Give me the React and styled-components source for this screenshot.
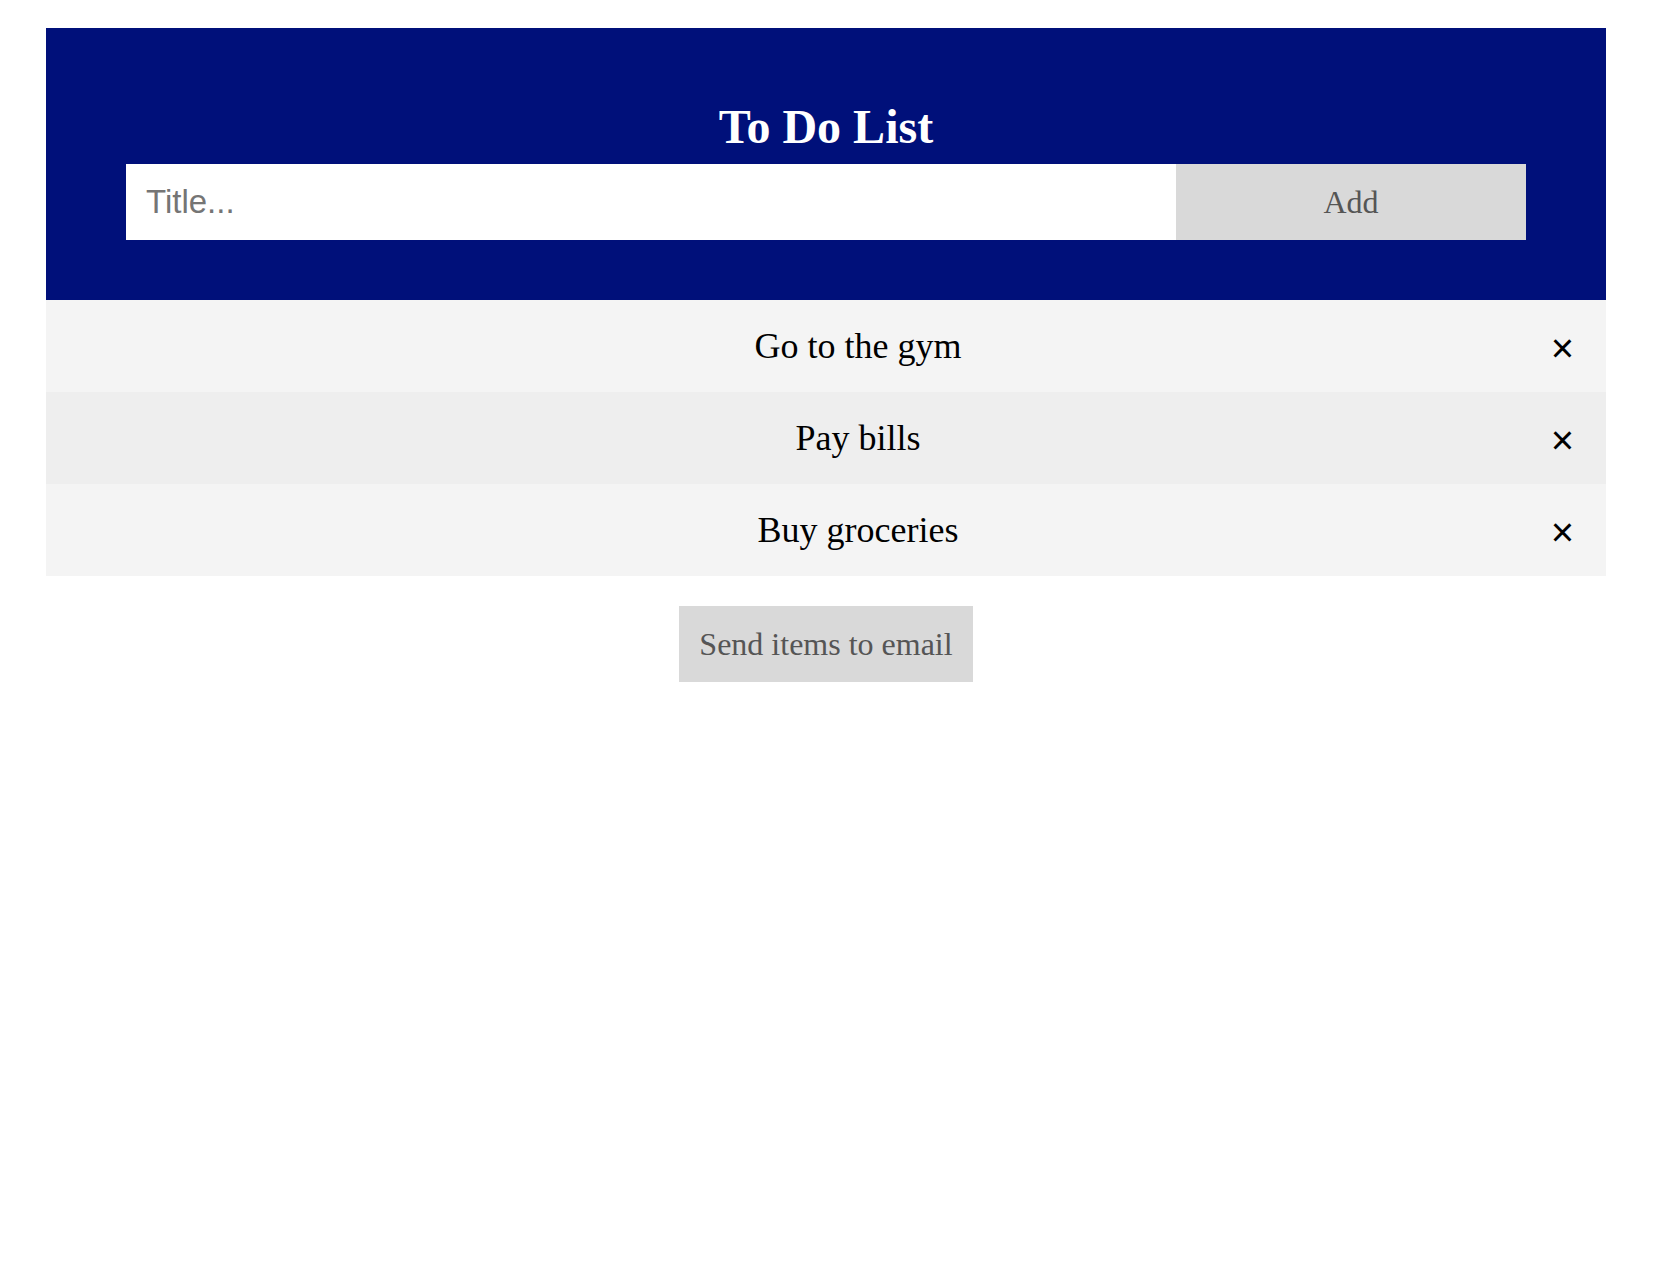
import { useState } from 'react';
import styled, { createGlobalStyle } from 'styled-components';

const GlobalStyle = createGlobalStyle`
    body {
        margin: 0;
        background: #ffffff;
        font-family: "Liberation Serif", "Times New Roman", serif;
    }
`

const Page = styled.div`
    padding: 28px 48px 0 46px;
`

const Header = styled.div`
    background: #00107a;
    padding: 60px 80px;
    color: #ffffff;
    text-align: center;
`

const Title = styled.h2`
    margin: 11px 0 10px;
    font-size: 48px;
    line-height: 55px;
    font-weight: bold;
`

const Form = styled.div`
    display: flex;
`

const TitleInput = styled.input`
    width: 75%;
    box-sizing: border-box;
    margin: 0;
    border: none;
    border-radius: 0;
    padding: 20px;
    font-family: "Liberation Sans", Arial, sans-serif;
    font-size: 33px;
    line-height: 36px;
    height: 76px;
    color: #000;
    outline: none;

    &::placeholder {
        color: #757575;
    }
`

const GreyButton = styled.span`
    display: flex;
    align-items: center;
    justify-content: center;
    box-sizing: border-box;
    background: #d9d9d9;
    color: #555555;
    font-size: 32px;
    line-height: 36px;
    height: 76px;
    padding: 20px;
    cursor: pointer;
`

const AddBtn = styled(GreyButton)`
    width: 25%;
`

const List = styled.ul`
    margin: 0;
    padding: 0;
    list-style: none;
`

const Item = styled.li`
    position: relative;
    padding: 24px 16px 24px 80px;
    font-size: 36px;
    line-height: 44px;
    text-align: center;
    color: #000;
    background: ${props => props.odd ? '#f4f4f4' : '#eeeeee'};
`

const Close = styled.span`
    position: absolute;
    right: 0;
    top: 0;
    padding: 24px 32px 24px 32px;
    font-family: "Liberation Sans", Arial, sans-serif;
    font-size: 40px;
    line-height: 44px;
    margin-top: 2px;
    cursor: pointer;
`

const SendRow = styled.div`
    display: flex;
    justify-content: center;
    margin-top: 30px;
`

export default function App() {
    const [items, setItems] = useState(['Go to the gym', 'Pay bills', 'Buy groceries'])
    const [value, setValue] = useState('')

    const handleAdd = () => {
        if (!value.trim()) return
        setItems([...items, value])
        setValue('')
    }

    return (
        <>
            <GlobalStyle />
            <Page>
                <Header>
                    <Title>To Do List</Title>
                    <Form>
                        <TitleInput type="text" placeholder="Title..." value={value} onChange={(e) => setValue(e.target.value)} />
                        <AddBtn onClick={handleAdd}>Add</AddBtn>
                    </Form>
                </Header>
                <List>
                    {items.map((item, i) => (
                        <Item key={i} odd={i % 2 === 0}>
                            {item}
                            <Close onClick={() => setItems(items.filter((_, j) => j !== i))}>{'\u00D7'}</Close>
                        </Item>
                    ))}
                </List>
                <SendRow>
                    <GreyButton>Send items to email</GreyButton>
                </SendRow>
            </Page>
        </>
    )
}
